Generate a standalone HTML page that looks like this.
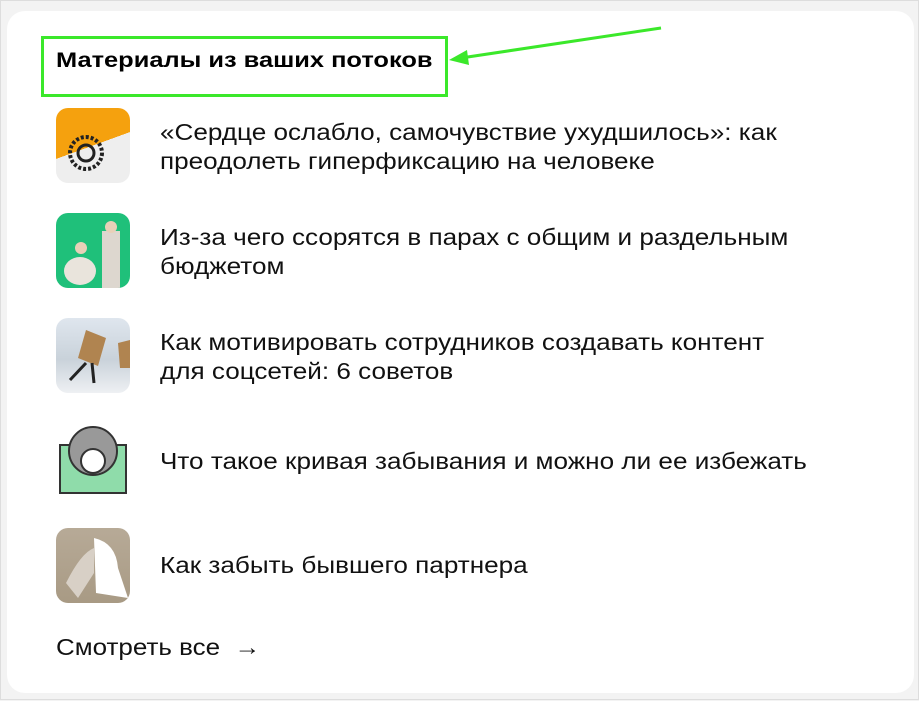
<!DOCTYPE html>
<html><head><meta charset="utf-8"><style>
body{margin:0;width:919px;height:700px;background:#f3f3f3;font-family:"Liberation Sans",sans-serif;position:relative;overflow:hidden;border:1px solid #ddd;box-sizing:border-box}
.card{position:absolute;left:6px;top:10px;width:907px;height:682px;background:#fff;border-radius:18px}
h1{position:absolute;left:55px;top:48px;margin:0;font-size:21px;font-weight:bold;color:#000;transform:scaleX(1.21);transform-origin:0 0;white-space:nowrap}
.box{position:absolute;left:40px;top:35px;width:401px;height:55px;border:3px solid #3be82a}
.item{position:absolute;left:55px;width:74px;height:75px;border-radius:12px;overflow:hidden}
.t{position:absolute;left:159px;font-size:23px;line-height:29px;color:#111;transform:scaleX(1.135);transform-origin:0 0;white-space:nowrap}
.more{position:absolute;left:55px;top:633px;font-size:23px;color:#111;transform:scaleX(1.13);transform-origin:0 0;white-space:nowrap}
</style></head><body>
<div class="card"></div>
<h1>Материалы из ваших потоков</h1>
<div class="box"></div>
<svg style="position:absolute;left:0;top:0" width="919" height="700"><line x1="660" y1="27" x2="460" y2="57" stroke="#3be82a" stroke-width="3"/><polygon points="448,59 466,49 468,64" fill="#3be82a"/></svg>

<div class="item" style="top:107px;background:linear-gradient(160deg,#f5a10e 0 50%,#eee 50%)"><svg width="74" height="75"><circle cx="30" cy="45" r="16" fill="none" stroke="#222" stroke-width="4" stroke-dasharray="3 2"/><circle cx="30" cy="45" r="8" fill="none" stroke="#222" stroke-width="3"/></svg></div>
<div class="t" style="top:117px">«Сердце ослабло, самочувствие ухудшилось»: как<br>преодолеть гиперфиксацию на человеке</div>

<div class="item" style="top:212px;background:#1fc07a"><svg width="74" height="75"><ellipse cx="24" cy="58" rx="16" ry="14" fill="#e9e4dc"/><rect x="46" y="18" width="18" height="57" fill="#ddd7cf"/><circle cx="25" cy="35" r="6" fill="#e8d0b8"/><circle cx="55" cy="14" r="6" fill="#e8d0b8"/></svg></div>
<div class="t" style="top:222px">Из-за чего ссорятся в парах с общим и раздельным<br>бюджетом</div>

<div class="item" style="top:317px;background:linear-gradient(#dfe6ee,#c9d2da 55%,#eef0f3)"><svg width="74" height="75"><polygon points="30,12 50,20 42,48 22,40" fill="#b08450"/><polygon points="62,25 74,22 74,50 64,50" fill="#b08450"/><line x1="30" y1="45" x2="14" y2="62" stroke="#222" stroke-width="3"/><line x1="36" y1="45" x2="38" y2="65" stroke="#222" stroke-width="3"/></svg></div>
<div class="t" style="top:327px">Как мотивировать сотрудников создавать контент<br>для соцсетей: 6 советов</div>

<div class="item" style="top:422px;background:#fff"><svg width="74" height="75"><rect x="4" y="22" width="66" height="48" fill="#8fdcaa" stroke="#333" stroke-width="2"/><circle cx="37" cy="28" r="24" fill="#999" stroke="#333" stroke-width="2"/><circle cx="37" cy="38" r="12" fill="#fff" stroke="#333" stroke-width="2"/></svg></div>
<div class="t" style="top:446px">Что такое кривая забывания и можно ли ее избежать</div>

<div class="item" style="top:527px;background:linear-gradient(#b7aa97,#a89a84)"><svg width="74" height="75"><path d="M10 55 Q25 25 38 20 L38 45 L22 70Z" fill="#d8d0c6"/><path d="M38 10 Q60 15 62 40 L72 70 L40 65Z" fill="#fff"/></svg></div>
<div class="t" style="top:550px">Как забыть бывшего партнера</div>

<div class="more">Смотреть все &nbsp;→</div>
</body></html>
